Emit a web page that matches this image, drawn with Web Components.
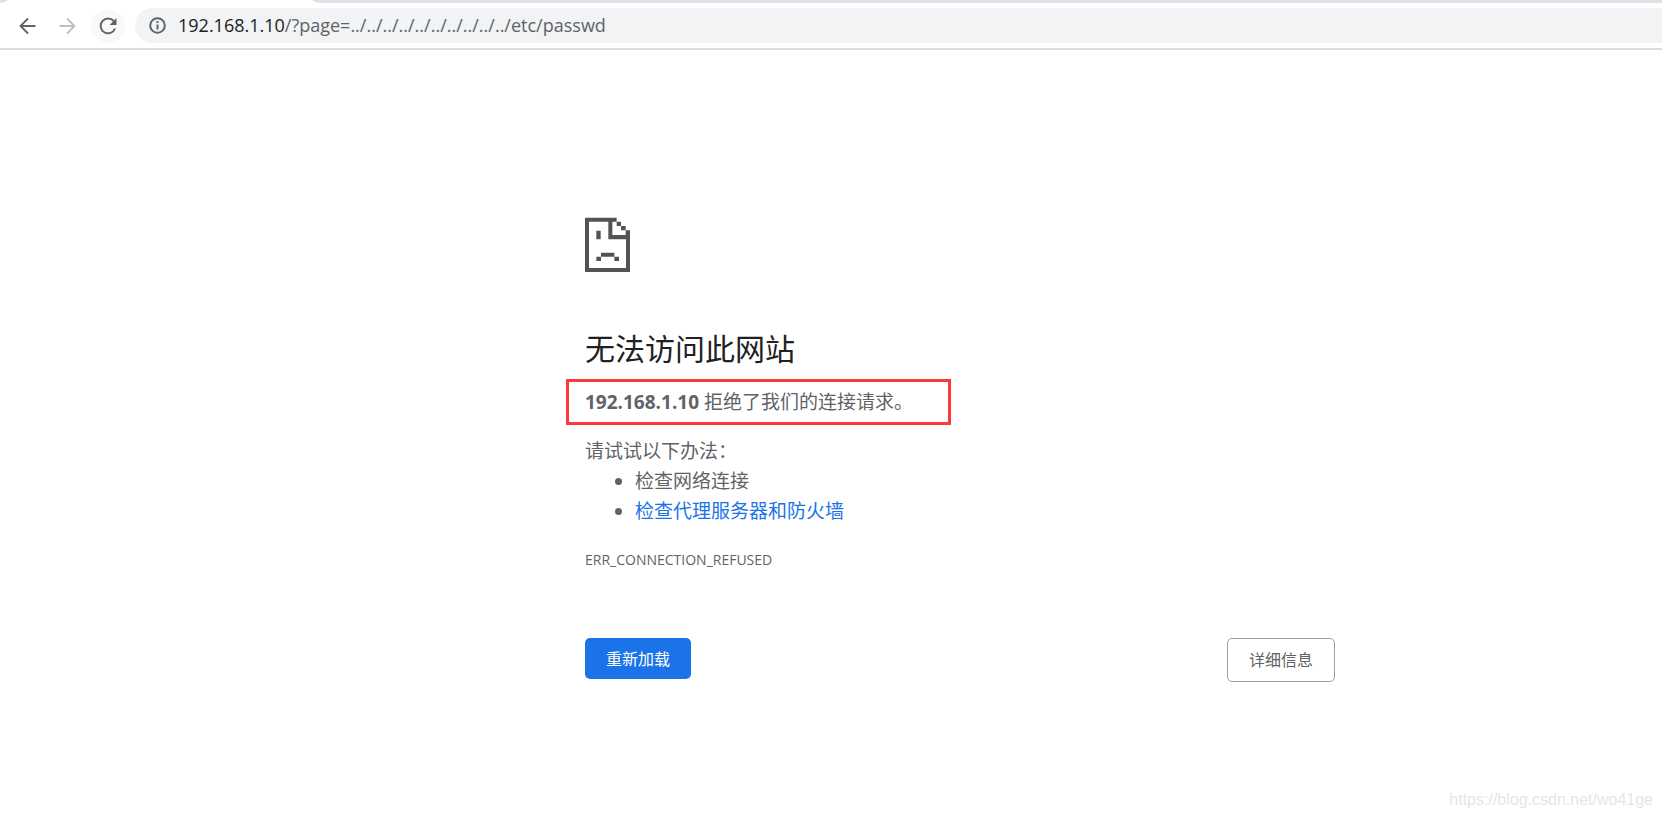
<!DOCTYPE html>
<html lang="zh-CN">
<head>
<meta charset="utf-8">
<meta name="viewport" content="width=device-width, initial-scale=1">
<title>192.168.1.10</title>
<style>
html, body { height: 100%; }
body { margin: 0; background: #fff; color: #5f6368; font-family: "Open Sans", "Noto Sans CJK SC", sans-serif; font-size: 19px; line-height: 30px; }
</style>
</head>
<body>
<browser-page></browser-page>
<script>
const define = (name, html, setup) => customElements.define(name, class extends HTMLElement {
  constructor() {
    super();
    this.attachShadow({ mode: "open" }).innerHTML = html;
    if (setup) setup(this);
  }
});

define("tab-strip", `
<style>
:host { display: flex; height: 3px; background: #fff; overflow: hidden; }
.before { width: 7px; background: #dee1e6; border-bottom-right-radius: 7px 3px; }
.tab { width: 306px; }
.after { flex: 1; background: #dee1e6; border-bottom-left-radius: 7px 3px; }
</style>
<div class="before"></div><div class="tab"></div><div class="after"></div>`);

define("tool-button", `
<style>
:host { display: block; }
button { display: grid; place-items: center; width: 34px; height: 34px; padding: 0; border: 0; border-radius: 50%; background: var(--fill, none); color: var(--ink, #5f6368); }
</style>
<button type="button"><slot></slot></button>`, host => {
  host.shadowRoot.querySelector("button").setAttribute("aria-label", host.getAttribute("label"));
});

define("address-bar", `
<style>
:host { display: flex; align-items: center; flex: 1; height: 35px; padding-left: 14px; gap: 12px; border-radius: 18px 0 0 18px; background: #f1f3f4; font-size: 18px; line-height: 32px; white-space: nowrap; }
span { padding-bottom: 2px; }
b { font-weight: 400; color: #202124; }
svg { display: block; }
</style>
<svg width="17" height="17" viewBox="0 0 17 17" fill="none" stroke="#5f6368" stroke-width="2"><circle cx="8.5" cy="8.5" r="7.3"/><path d="M8.5 7.5v5M8.5 4v2"/></svg>
<span><b><slot name="host"></slot></b><slot></slot></span>`);

define("browser-toolbar", `
<style>
:host { display: flex; align-items: center; height: 45px; padding-left: 11px; border-bottom: 2px solid #dadce0; }
nav { display: flex; gap: 6px; margin-right: 10px; }
svg { display: block; }
.off { --ink: #bdc0c3; }
.lit { --fill: #f9f9fa; }
</style>
<nav>
<tool-button label="后退"><svg width="18" height="18" viewBox="0 0 18 18" fill="none" stroke="currentColor" stroke-width="1.800"><path d="M16.500 9H2M9 1.500L1.500 9 9 16.500"/></svg></tool-button>
<tool-button label="前进" class="off"><svg width="18" height="18" viewBox="0 0 18 18" fill="none" stroke="currentColor" stroke-width="1.800"><path d="M0.500 9H15M8 1.500L15.500 9 8 16.500"/></svg></tool-button>
<tool-button label="重新加载" class="lit"><svg width="18" height="18" viewBox="0 0 18 18"><path d="M14.800 4.200A7.400 7.400 0 1 0 16 11.500" fill="none" stroke="currentColor" stroke-width="2"/><path d="M17.500 1v7h-7z" fill="currentColor"/></svg></tool-button>
</nav>
<address-bar><span slot="host">192.168.1.10</span>/?page=../../../../../../../../../../etc/passwd</address-bar>`);

define("sad-page-icon", `
<style>:host, svg { display: block; }</style>
<svg width="45" height="55" viewBox="0 0 135 165" fill="#535353" aria-hidden="true">
<path fill-rule="evenodd" d="M0 2h95v12h13v13h14v13h13v125H0zM12 14v139h111V67H70V14zM82 14v40h40V40h-14V27H95V14z"/>
<path d="M34 41h13v26H34zM48 107h40v12H48zM34 119h14v13H34zM88 119h14v13H88z"/>
</svg>`);

define("marked-line", `
<style>
:host { display: block; position: relative; }
:host::after { content: ""; position: absolute; left: -19px; top: -8px; width: 385px; height: 46px; box-sizing: border-box; border: 3px solid #fd3a3a; }
</style>
<slot></slot>`);

define("action-button", `
<style>
:host { display: block; }
button { display: block; box-sizing: border-box; height: 41px; padding: 0 21px; border: 0; border-radius: 5px; background: #1a73e8; color: #fff; font-family: inherit; font-size: 16px; line-height: 24px; }
:host([secondary]) button { height: 44px; border: 1px solid #9aa0a6; background: #fff; color: #5f6368; }
</style>
<button type="button"><slot></slot></button>`);

define("error-panel", `
<style>
:host { display: block; padding-top: 167px; }
h1 { margin: 53px 0 14px; color: #202124; font-size: 30px; font-weight: 400; line-height: 48px; }
p, ul { margin: 0; }
.tips { margin-top: 19px; }
ul { padding-left: 50px; }
a { color: #1a73e8; text-decoration: none; }
.code { margin-top: 23px; font-size: 14px; line-height: 22px; }
.actions { display: flex; justify-content: space-between; align-items: flex-start; margin-top: 67px; }
</style>
<sad-page-icon></sad-page-icon>
<h1>无法访问此网站</h1>
<marked-line><p><strong>192.168.1.10</strong> 拒绝了我们的连接请求。</p></marked-line>
<p class="tips">请试试以下办法：</p>
<ul><li>检查网络连接</li><li><a href="#">检查代理服务器和防火墙</a></li></ul>
<p class="code">ERR_CONNECTION_REFUSED</p>
<div class="actions"><action-button>重新加载</action-button><action-button secondary>详细信息</action-button></div>`);

define("browser-page", `
<style>
:host { display: flex; flex-direction: column; min-height: 100%; }
main { flex: 1; display: grid; grid-template-columns: 585fr minmax(0, 750px) 327fr; }
error-panel { grid-column: 2; }
footer { padding: 0 9px 5px; text-align: right; color: #e6e6e6; font-family: "Liberation Sans", sans-serif; font-size: 16px; line-height: 24px; }
</style>
<header><tab-strip></tab-strip><browser-toolbar></browser-toolbar></header>
<main><error-panel></error-panel></main>
<footer>https://blog.csdn.net/wo41ge</footer>`);
</script>
</body>
</html>
